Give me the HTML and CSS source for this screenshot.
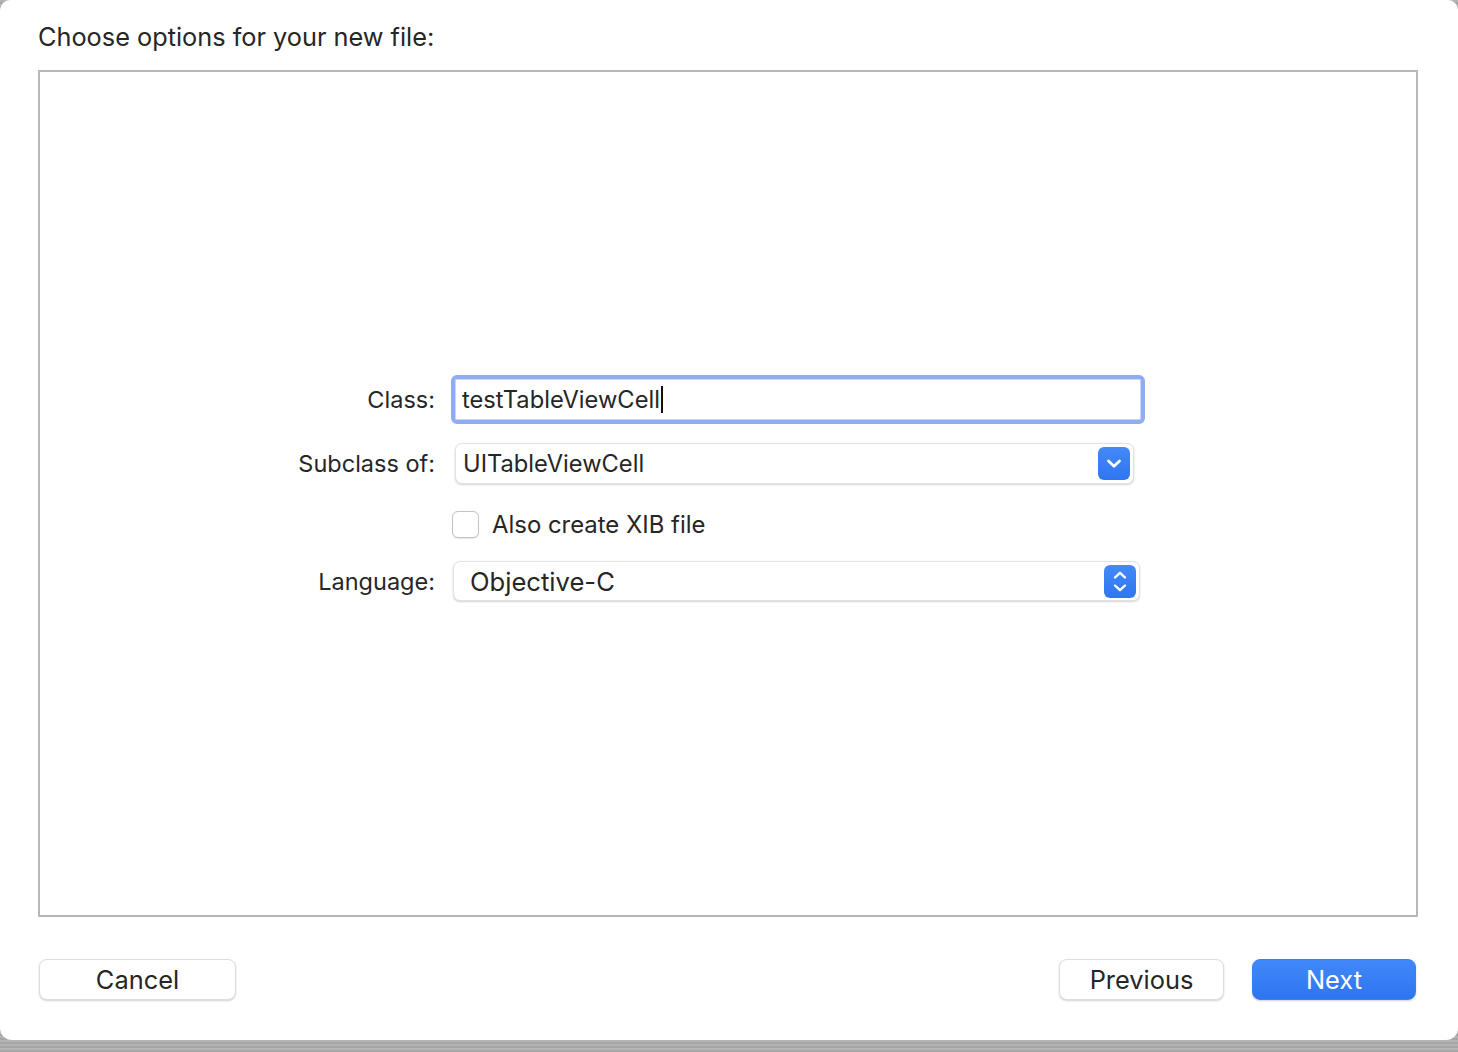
FILE: index.html
```html
<!DOCTYPE html>
<html>
<head>
<meta charset="utf-8">
<link rel="stylesheet" href="styles.css">
</head>
<body>
<div class="dialog">
  <div class="title">Choose options for your new file:</div>
  <div class="panel">
    <div class="form">
      <div class="row row-class">
        <label class="lbl">Class:</label>
        <div class="textfield"><span class="val">testTableViewCell</span><span class="caret"></span></div>
      </div>
      <div class="row row-sub">
        <label class="lbl">Subclass of:</label>
        <div class="combo">
          <span class="val">UITableViewCell</span>
          <span class="bluebtn">
            <svg width="32" height="33" viewBox="0 0 32 33"><path d="M10.5 14 L16 19.2 L21.5 14" fill="none" stroke="#fff" stroke-width="2.8" stroke-linecap="round" stroke-linejoin="round"/></svg>
          </span>
        </div>
      </div>
      <div class="row row-check">
        <span class="lbl"></span>
        <div class="check"><span class="box"></span><span class="ctext">Also create XIB file</span></div>
      </div>
      <div class="row row-lang">
        <label class="lbl">Language:</label>
        <div class="popup">
          <span class="val">Objective-C</span>
          <span class="bluebtn">
            <svg width="32" height="33" viewBox="0 0 32 33"><path d="M11 12.5 L16 7.8 L21 12.5 M11 20.5 L16 25.2 L21 20.5" fill="none" stroke="#fff" stroke-width="2.4" stroke-linecap="round" stroke-linejoin="round"/></svg>
          </span>
        </div>
      </div>
    </div>
  </div>
  <div class="footer">
    <button class="btn cancel">Cancel</button>
    <div class="right">
      <button class="btn">Previous</button>
      <button class="btn primary">Next</button>
    </div>
  </div>
</div>
</body>
</html>
```

FILE: styles.css
```css
html, body {
  margin: 0;
  padding: 0;
}
body {
  width: 1458px;
  height: 1052px;
  background: repeating-linear-gradient(#b4b4b4 0, #b4b4b4 2px, #a6a6a6 2px, #a6a6a6 4px);
  font-family: "Inter", "Liberation Sans", sans-serif;
  color: #262626;
  overflow: hidden;
}
.dialog {
  width: 1458px;
  height: 1040px;
  background: #fff;
  border-radius: 10px 10px 12px 12px;
  display: flex;
  flex-direction: column;
  box-sizing: border-box;
  padding: 0 40px 0 38px;
}
.title {
  font-size: 25.3px;
  line-height: 30px;
  padding-top: 22px;
  height: 70px;
  box-sizing: border-box;
  color: #262626;
  flex: none;
}
.panel {
  height: 847px;
  flex: none;
  border: 2px solid #b8b8b8;
  box-sizing: border-box;
  padding-top: 303px;
}
.form {
  display: flex;
  flex-direction: column;
}
.row {
  display: flex;
  align-items: center;
}
.lbl {
  width: 395px;
  text-align: right;
  font-size: 23.5px;
  margin-right: 16px;
  flex: none;
  color: #262626;
}
.row-class { height: 49px; }
.row-sub { height: 41px; margin-top: 19px; }
.row-check { height: 27px; margin-top: 27px; }
.row-lang { height: 40px; margin-top: 23px; }
.textfield {
  width: 694px;
  height: 49px;
  box-sizing: border-box;
  border: 4px solid #90acf2;
  border-radius: 6px;
  display: flex;
  align-items: center;
  padding-left: 7px;
  box-shadow: inset 0 0 0 1px #c9d6f7;
}
.val {
  font-size: 23.7px;
  color: #262626;
}
.caret {
  width: 2px;
  height: 27px;
  background: #111;
  margin-left: 1px;
}
.combo, .popup {
  display: flex;
  align-items: center;
  justify-content: space-between;
  box-sizing: border-box;
  background: #fff;
  border-radius: 7px;
  border: 1px solid #e2e2e2;
  box-shadow: 0 1px 2px rgba(0,0,0,0.18);
}
.combo {
  width: 679px;
  height: 41px;
  margin-left: 4px;
  padding: 0 3px 0 7px;
}
.popup {
  width: 687px;
  height: 40px;
  margin-left: 2px;
  padding: 0 3px 0 16px;
}
.popup .val { font-size: 25.6px; }
.bluebtn {
  width: 32px;
  height: 33px;
  border-radius: 6px;
  background: linear-gradient(#4389f8, #2f76f2);
  display: flex;
  align-items: center;
  justify-content: center;
}
.bluebtn svg { display: block; }
.check {
  display: flex;
  align-items: center;
  margin-left: 1px;
}
.box {
  width: 27px;
  height: 27px;
  box-sizing: border-box;
  border: 1px solid #c4c4c4;
  border-radius: 6px;
  background: #fff;
  box-shadow: 0 0.5px 1px rgba(0,0,0,0.1);
}
.ctext {
  font-size: 23.9px;
  margin-left: 13px;
  color: #262626;
}
.footer {
  display: flex;
  justify-content: space-between;
  align-items: flex-start;
  padding-top: 42px;
  padding-left: 1px;
}
.right {
  display: flex;
  gap: 28px;
  margin-right: 2px;
}
.btn {
  font-family: "Inter", "Liberation Sans", sans-serif;
  font-size: 25.4px;
  height: 41px;
  width: 165px;
  border-radius: 8px;
  border: 1px solid #dedede;
  background: #fff;
  color: #262626;
  box-shadow: 0 1px 2px rgba(0,0,0,0.18);
  padding: 0;
}
.btn.cancel { width: 197px; }
.btn.primary {
  width: 164px;
  background: linear-gradient(#4189f8, #2e74f0);
  border-color: #3a80f5;
  color: #fff;
}
```
